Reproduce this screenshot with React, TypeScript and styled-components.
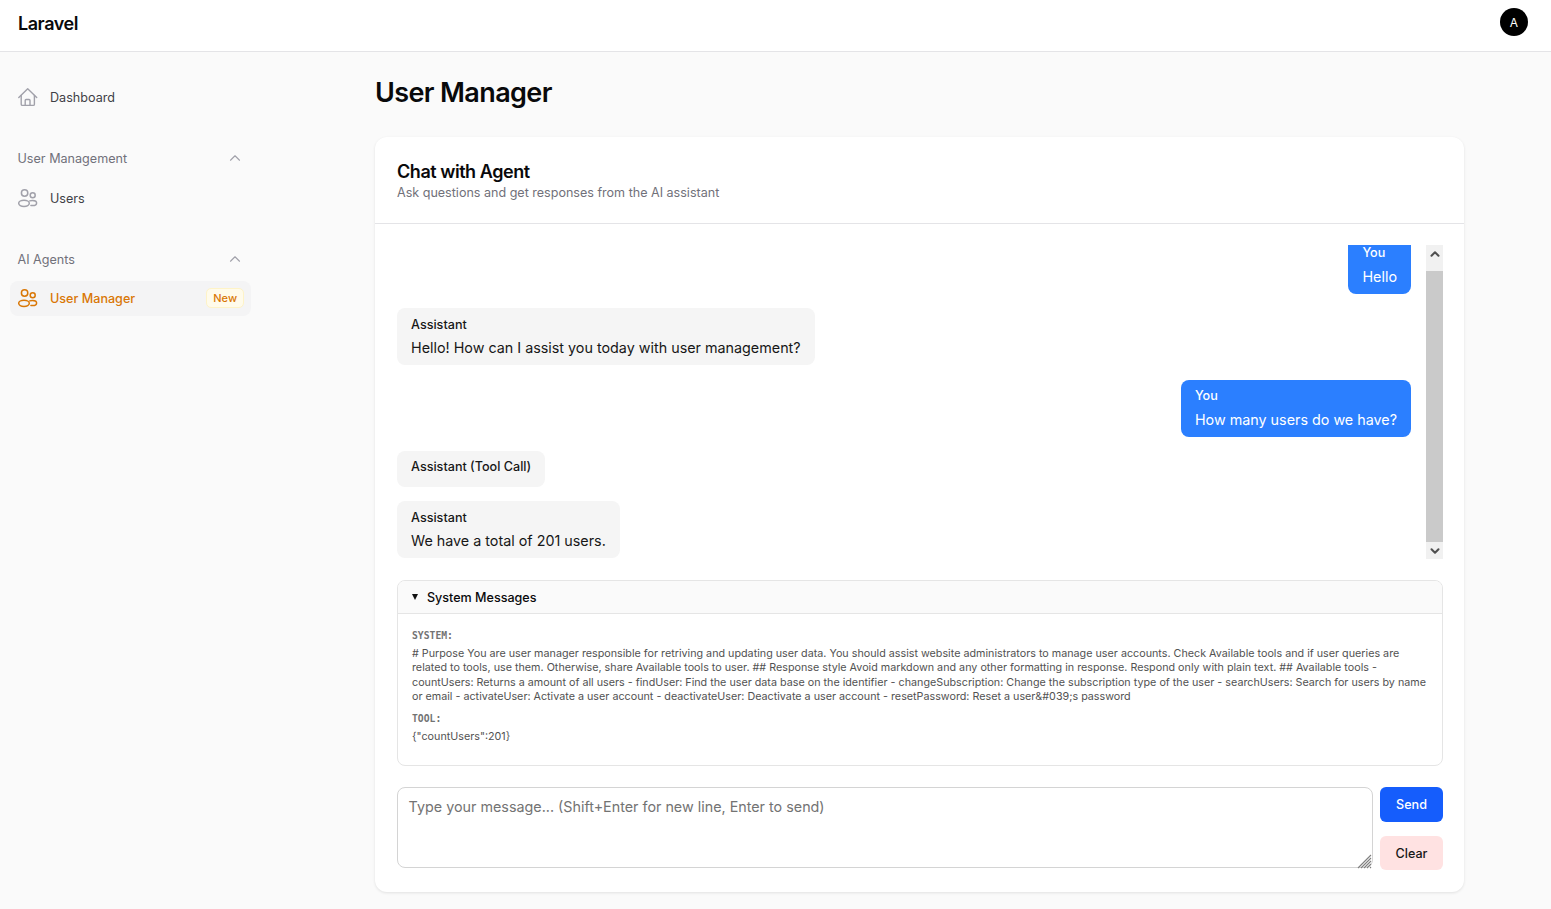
import React, { useEffect, useRef } from "react";
import styled, { createGlobalStyle } from "styled-components";
import { ChevronUp } from "lucide-react";

const GlobalStyle = createGlobalStyle`
    html, body {
        margin: 0;
        padding: 0;
        background: #fafafa;
        font-family: Inter, "Liberation Sans", sans-serif;
        color: #09090b;
    }
    * { box-sizing: border-box; }
`;

const Page = styled.div`
    width: 100%;
    height: 909px;
    overflow: hidden;
    display: flex;
    flex-direction: column;
`;

const TopBar = styled.header`
    height: 52px;
    flex: none;
    display: flex;
    align-items: center;
    justify-content: space-between;
    padding: 0 23px 7px 18px;
    background: #fff;
    border-bottom: 1px solid #e4e4e7;
`;

const Brand = styled.div`
    margin-top: 2px;
    font-size: 18px;
    font-weight: 600;
    letter-spacing: -0.45px;
    color: #09090b;
`;

const Avatar = styled.div`
    width: 28px;
    height: 28px;
    border-radius: 50%;
    background: #000;
    color: #fff;
    font-size: 12px;
    display: flex;
    align-items: center;
    justify-content: center;
`;

const Body = styled.div`
    flex: 1;
    display: flex;
    min-height: 0;
`;

const Sidebar = styled.nav`
    width: 375px;
    flex: none;
    padding: 27.6px 124px 0 10px;
    display: flex;
    flex-direction: column;
`;

const NavGroup = styled.div`
    display: flex;
    flex-direction: column;
    margin-bottom: 26px;
`;

const GroupTitle = styled.div<{ $tight?: boolean }>`
    height: 35px;
    margin-bottom: ${(p) => (p.$tight ? "4.4px" : "5px")};
    padding: 0 7.5px 0 7.5px;
    display: flex;
    align-items: center;
    justify-content: space-between;
    font-size: 12.6px;
    color: #71717a;

    svg {
        color: #a1a1aa;
    }
`;

const NavItem = styled.div<{ $active?: boolean }>`
    height: 35px;
    padding: 0 7px 0 8px;
    display: flex;
    align-items: center;
    gap: 12px;
    border-radius: 8px;
    font-size: 12.6px;
    font-weight: ${(p) => (p.$active ? 500 : 400)};
    background: ${(p) => (p.$active ? "#f4f4f5" : "transparent")};
    color: ${(p) => (p.$active ? "#d97706" : "#3f3f46")};

    svg {
        flex: none;
        color: ${(p) => (p.$active ? "#d97706" : "#a1a1aa")};
    }
`;

const NavLabel = styled.span`
    flex: 1;
`;

const Badge = styled.span`
    height: 20px;
    padding: 0 6px;
    display: flex;
    align-items: center;
    font-size: 11px;
    font-weight: 500;
    color: #d97706;
    background: #fffbeb;
    border: 1px solid #fef3c7;
    border-radius: 5px;
`;

const Main = styled.main`
    width: 1089px;
    flex: none;
`;

const PageTitle = styled.h1`
    margin: 24px 0 27px;
    font-size: 27px;
    line-height: 34px;
    font-weight: 600;
    letter-spacing: -0.62px;
`;

const Card = styled.section`
    height: 755px;
    background: #fff;
    border-radius: 12px;
    box-shadow: 0 1px 3px rgba(0, 0, 0, 0.1);
    display: flex;
    flex-direction: column;
`;

const CardHead = styled.div`
    height: 87px;
    flex: none;
    padding: 24px 22px 0;
    border-bottom: 1px solid #e4e4e7;
`;

const CardTitle = styled.h2`
    margin: 0;
    font-size: 18px;
    line-height: 22px;
    font-weight: 600;
    letter-spacing: -0.45px;
`;

const CardSub = styled.p`
    margin: 0;
    font-size: 12.56px;
    line-height: 20px;
    color: #71717a;
`;

const CardBody = styled.div`
    padding: 21px 21px 0 22px;
    display: flex;
    flex-direction: column;
`;

const ChatRow = styled.div`
    display: flex;
    height: 314px;
`;

const MessageList = styled.div`
    flex: 1;
    min-width: 0;
    padding: 0 15px 1px 0;
    overflow-y: scroll;
    scrollbar-width: none;
    display: flex;
    flex-direction: column;
    gap: 14.4px;
`;

const Bubble = styled.div<{ $mine?: boolean }>`
    flex: none;
    align-self: ${(p) => (p.$mine ? "flex-end" : "flex-start")};
    padding: 7.2px 14px;
    border-radius: 8px;
    background: ${(p) => (p.$mine ? "#2b7fff" : "#f5f5f5")};
    color: ${(p) => (p.$mine ? "#fff" : "#171717")};
`;

const Sender = styled.div`
    margin-bottom: 3.6px;
    font-size: 12.6px;
    line-height: 18px;
    font-weight: 500;
`;

const Text = styled.div`
    font-size: 14.34px;
    line-height: 21px;
`;

const Scrollbar = styled.div`
    width: 17px;
    flex: none;
    display: flex;
    flex-direction: column;
    background: #f1f1f1;
`;

const ScrollButton = styled.div<{ $down?: boolean }>`
    height: 17px;
    flex: none;
    display: flex;
    align-items: center;
    justify-content: center;
    color: #505050;

    svg {
        transform: ${(p) => (p.$down ? "rotate(180deg)" : "none")};
    }
`;

const ScrollThumb = styled.div`
    flex: 1;
    margin-top: 9px;
    background: #cacaca;
`;

const Disclosure = styled.div`
    margin-top: 21px;
    height: 186px;
    border: 1px solid #e5e5e5;
    border-radius: 8px;
    overflow: hidden;
`;

const DisclosureHead = styled.div`
    height: 33px;
    padding: 0 14px;
    display: flex;
    align-items: center;
    gap: 9px;
    background: #fafafa;
    border-bottom: 1px solid #e5e5e5;
    font-size: 12.56px;
    font-weight: 500;
`;

const Caret = styled.span`
    width: 0;
    height: 0;
    border-left: 3.5px solid transparent;
    border-right: 3.5px solid transparent;
    border-top: 6px solid #111;
`;

const DisclosureBody = styled.div`
    padding: 14px 14px 0;
`;

const LogEntry = styled.div`
    margin-bottom: 6px;
`;

const LogRole = styled.div`
    font-family: "DejaVu Sans Mono", "Liberation Mono", monospace;
    font-size: 9.72px;
    line-height: 15px;
    font-weight: 700;
    color: #737373;
`;

const LogText = styled.div`
    margin-top: 4px;
    font-size: 10.75px;
    line-height: 14.4px;
    color: #525252;
`;

const Composer = styled.div`
    margin-top: 21px;
    display: flex;
    gap: 7px;
`;

const InputWrap = styled.div`
    flex: 1;
    position: relative;
    display: flex;
`;

const Input = styled.textarea`
    flex: 1;
    height: 81px;
    padding: 9px 10.6px;
    border: 1px solid #d4d4d4;
    border-radius: 8px;
    background: #fff;
    outline: none;
    resize: none;
    font-family: inherit;
    font-size: 14.34px;
    line-height: 20px;

    &::placeholder {
        color: #737373;
        opacity: 1;
    }
`;

const ResizeGrip = styled.svg`
    position: absolute;
    right: 1px;
    bottom: 1px;
    color: #808080;
`;

const Buttons = styled.div`
    width: 63px;
    flex: none;
    display: flex;
    flex-direction: column;
    gap: 14px;
`;

const Button = styled.button<{ $danger?: boolean }>`
    height: ${(p) => (p.$danger ? "34px" : "35px")};
    padding: 0;
    border: none;
    border-radius: 6px;
    font-family: inherit;
    font-size: 12.6px;
    font-weight: 500;
    background: ${(p) => (p.$danger ? "#ffe2e2" : "#155dfc")};
    color: ${(p) => (p.$danger ? "#171717" : "#fff")};
`;

const HomeIcon = () => (
    <svg width={20} height={20} viewBox="0 0 20 20" fill="none" stroke="currentColor" strokeWidth={1.4} strokeLinecap="round" strokeLinejoin="round">
        <path d="M.8 10.5 9.7 1.8l9 8.7" />
        <path d="M3.2 8.5v8.7c0 .7.5 1.2 1.2 1.2h10.8c.7 0 1.2-.5 1.2-1.2V8.5" />
        <path d="M7.2 18.4v-5c0-.5.4-.9.9-.9h3c.5 0 .9.4.9.9v5" />
    </svg>
);

const PeopleIcon = () => (
    <svg width={20} height={20} viewBox="0 0 20 20" fill="none" stroke="currentColor" strokeWidth={1.5} strokeLinecap="round" strokeLinejoin="round">
        <circle cx="6.6" cy="5" r="3.2" />
        <circle cx="14.7" cy="7.2" r="2.5" />
        <ellipse cx="6" cy="15.3" rx="5.3" ry="3.1" />
        <path d="M11.8 12.9c.8-.4 1.8-.5 2.8-.5 2.2 0 4 1.1 4 2.6s-1.8 2.6-4 2.6c-.6 0-1.2-.1-1.7-.2" />
    </svg>
);

const systemText =
    "# Purpose You are user manager responsible for retriving and updating user data. You should assist website administrators to manage user accounts. Check Available tools and if user queries are related to tools, use them. Otherwise, share Available tools to user. ## Response style Avoid markdown and any other formatting in response. Respond only with plain text. ## Available tools - countUsers: Returns a amount of all users - findUser: Find the user data base on the identifier - changeSubscription: Change the subscription type of the user - searchUsers: Search for users by name or email - activateUser: Activate a user account - deactivateUser: Deactivate a user account - resetPassword: Reset a user&#039;s password";

const messages = [
    { id: 1, mine: true, sender: "You", text: "Hello" },
    { id: 2, mine: false, sender: "Assistant", text: "Hello! How can I assist you today with user management?" },
    { id: 3, mine: true, sender: "You", text: "How many users do we have?" },
    { id: 4, mine: false, sender: "Assistant (Tool Call)", text: "" },
    { id: 5, mine: false, sender: "Assistant", text: "We have a total of 201 users." },
];

export default function App() {
    const listRef = useRef<HTMLDivElement>(null);

    useEffect(() => {
        if (listRef.current) listRef.current.scrollTop = listRef.current.scrollHeight;
    }, []);

    return (
        <Page>
            <GlobalStyle />
            <TopBar>
                <Brand>Laravel</Brand>
                <Avatar>A</Avatar>
            </TopBar>
            <Body>
                <Sidebar>
                    <NavGroup>
                        <NavItem>
                            <HomeIcon />
                            <NavLabel>Dashboard</NavLabel>
                        </NavItem>
                    </NavGroup>
                    <NavGroup>
                        <GroupTitle>
                            User Management
                            <ChevronUp size={18} strokeWidth={1.5} />
                        </GroupTitle>
                        <NavItem>
                            <PeopleIcon />
                            <NavLabel>Users</NavLabel>
                        </NavItem>
                    </NavGroup>
                    <NavGroup>
                        <GroupTitle $tight>
                            AI Agents
                            <ChevronUp size={18} strokeWidth={1.5} />
                        </GroupTitle>
                        <NavItem $active>
                            <PeopleIcon />
                            <NavLabel>User Manager</NavLabel>
                            <Badge>New</Badge>
                        </NavItem>
                    </NavGroup>
                </Sidebar>
                <Main>
                    <PageTitle>User Manager</PageTitle>
                    <Card>
                        <CardHead>
                            <CardTitle>Chat with Agent</CardTitle>
                            <CardSub>Ask questions and get responses from the AI assistant</CardSub>
                        </CardHead>
                        <CardBody>
                            <ChatRow>
                                <MessageList ref={listRef}>
                                    {messages.map((m) => (
                                        <Bubble key={m.id} $mine={m.mine}>
                                            <Sender>{m.sender}</Sender>
                                            {m.text && <Text>{m.text}</Text>}
                                        </Bubble>
                                    ))}
                                </MessageList>
                                <Scrollbar>
                                    <ScrollButton>
                                        <ChevronUp size={14} strokeWidth={3.5} />
                                    </ScrollButton>
                                    <ScrollThumb />
                                    <ScrollButton $down>
                                        <ChevronUp size={14} strokeWidth={3.5} />
                                    </ScrollButton>
                                </Scrollbar>
                            </ChatRow>
                            <Disclosure>
                                <DisclosureHead>
                                    <Caret />
                                    System Messages
                                </DisclosureHead>
                                <DisclosureBody>
                                    <LogEntry>
                                        <LogRole>SYSTEM:</LogRole>
                                        <LogText>{systemText}</LogText>
                                    </LogEntry>
                                    <LogEntry>
                                        <LogRole>TOOL:</LogRole>
                                        <LogText>{'{"countUsers":201}'}</LogText>
                                    </LogEntry>
                                </DisclosureBody>
                            </Disclosure>
                            <Composer>
                                <InputWrap>
                                    <Input placeholder="Type your message... (Shift+Enter for new line, Enter to send)" />
                                    <ResizeGrip width={15} height={15} viewBox="0 0 15 15" fill="none" stroke="currentColor" strokeWidth={1.1}>
                                        <path d="M1 14 14 1M4 14 14 4M7 14 14 7M10 14 14 10M13 14 14 13" />
                                    </ResizeGrip>
                                </InputWrap>
                                <Buttons>
                                    <Button>Send</Button>
                                    <Button $danger>Clear</Button>
                                </Buttons>
                            </Composer>
                        </CardBody>
                    </Card>
                </Main>
            </Body>
        </Page>
    );
}
